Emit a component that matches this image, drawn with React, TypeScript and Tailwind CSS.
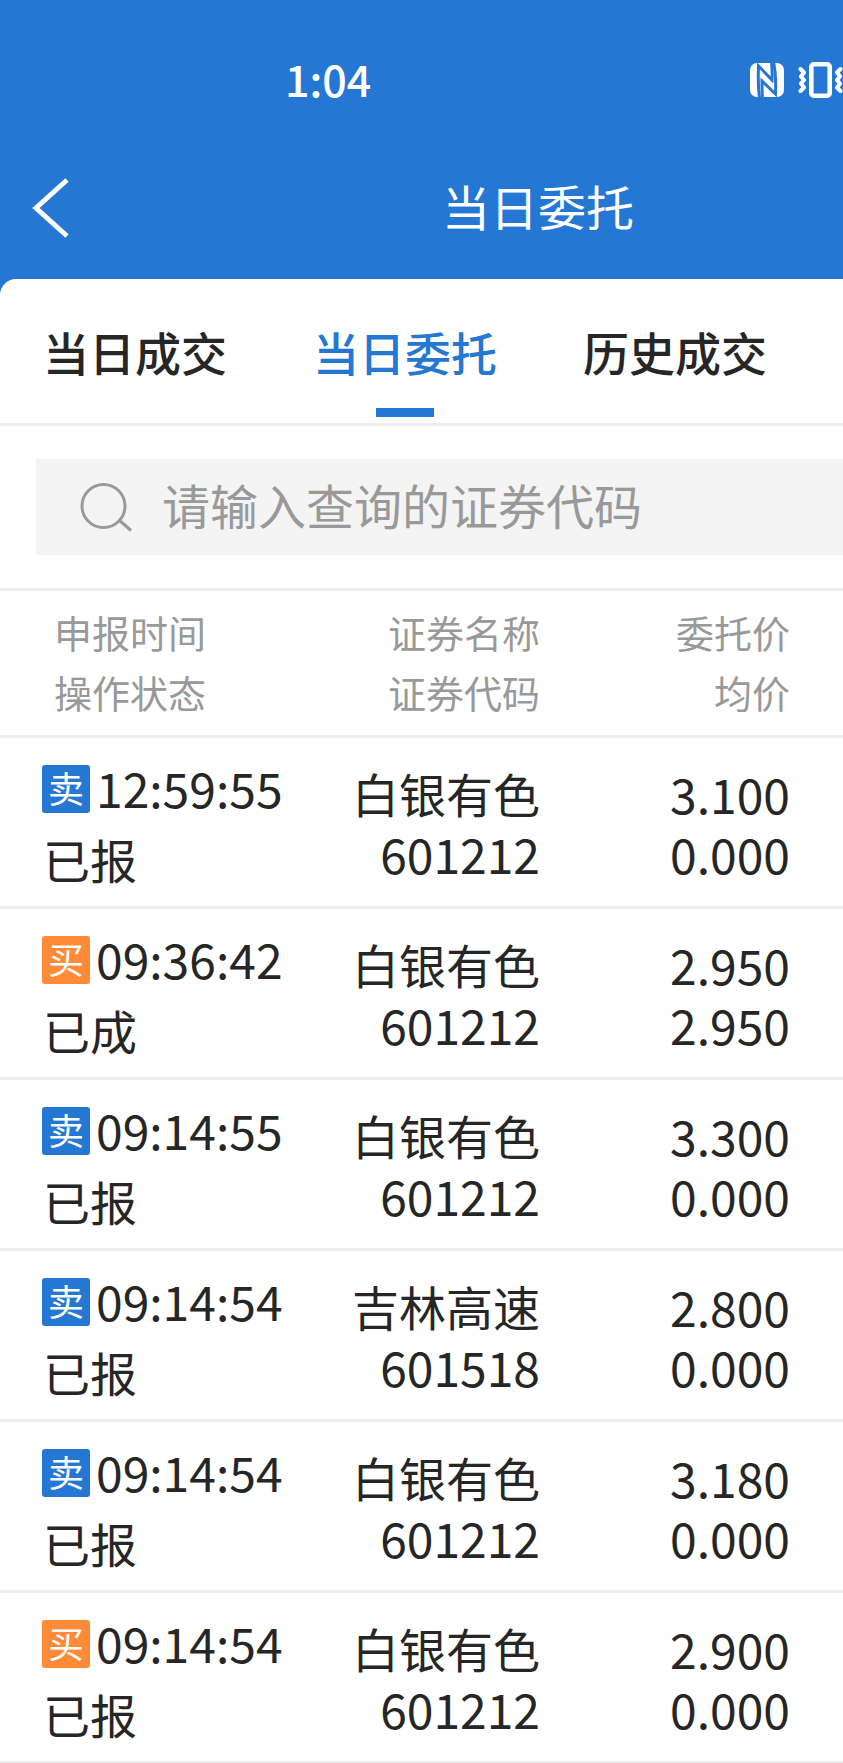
import { useState } from 'react';

const tabs = ['当日成交', '当日委托', '历史成交'];

const orders = [
  { side: 'sell', time: '12:59:55', status: '已报', name: '白银有色', code: '601212', price: '3.100', average: '0.000' },
  { side: 'buy', time: '09:36:42', status: '已成', name: '白银有色', code: '601212', price: '2.950', average: '2.950' },
  { side: 'sell', time: '09:14:55', status: '已报', name: '白银有色', code: '601212', price: '3.300', average: '0.000' },
  { side: 'sell', time: '09:14:54', status: '已报', name: '吉林高速', code: '601518', price: '2.800', average: '0.000' },
  { side: 'sell', time: '09:14:54', status: '已报', name: '白银有色', code: '601212', price: '3.180', average: '0.000' },
  { side: 'buy', time: '09:14:54', status: '已报', name: '白银有色', code: '601212', price: '2.900', average: '0.000' }
];

function NfcIcon() {
  return (
    <svg viewBox="0 0 34 34" className="h-[34px] w-[34px]" aria-hidden="true">
      <rect width="34" height="34" rx="7" fill="#fff" />
      <g fill="none" stroke="#2577d4" strokeWidth="3">
        <path d="M9.5 35C8.5 28 8 15 8.5 3L22 17C22.500 10 22 5 21.500 -1" />
        <path d="M23.500 -1C25.500 8 26 20 25.500 31L12 18C12 24 12 29 12.500 35" />
      </g>
    </svg>
  );
}

function VibrateIcon() {
  return (
    <svg viewBox="0 0 45 36" className="h-9 w-[45px]" fill="none" stroke="#fff" aria-hidden="true">
      <rect x="13.3" y="2.3" width="18.400" height="31.400" rx="2.500" strokeWidth="4.600" />
      <g strokeWidth="4" strokeLinecap="round" strokeLinejoin="round">
        <path d="M2.500 7L6 10.500L3 14.500L6 18L3 21.500L6 25.500L2.500 29" />
        <path d="M42.500 7L39 10.500L42 14.500L39 18L42 21.500L39 25.500L42.500 29" />
      </g>
    </svg>
  );
}

function Header() {
  return (
    <header className="text-white">
      <div className="flex h-[112px] items-center pt-12">
        <time className="ml-[285px] pb-1 text-[43px] leading-[54px] font-medium">1:04</time>
        <div className="ml-auto flex items-center gap-3.5">
          <NfcIcon />
          <VibrateIcon />
        </div>
      </div>
      <div className="flex h-[167px] items-center pt-6">
        <button type="button" aria-label="返回" className="ml-8">
          <svg viewBox="0 0 38 62" className="h-[62px] w-[38px]" fill="none" stroke="#fff" strokeWidth="5" aria-hidden="true">
            <path d="M35 3L4 31L35 59" />
          </svg>
        </button>
        <h1 className="ml-[372px] pb-1.5 text-5xl">当日委托</h1>
      </div>
    </header>
  );
}

function SearchBar() {
  return (
    <div className="border-b-[3px] border-[#ededed] py-[33px] pl-9">
      <label className="flex h-24 items-center bg-[#f4f4f4] pl-11">
        <svg viewBox="0 0 52 50" className="h-[50px] w-[52px] shrink-0" fill="none" stroke="#999" strokeWidth="3" aria-hidden="true">
          <circle cx="23.500" cy="24" r="21.500" />
          <path d="M39 38L51 48.500" />
        </svg>
        <input
          type="text"
          aria-label="证券代码"
          placeholder="请输入查询的证券代码"
          className="ml-[30px] h-full w-full min-w-0 bg-transparent pb-1.5 text-5xl text-[#262626] outline-none placeholder:text-[#999]"
        />
      </label>
    </div>
  );
}

function OrderTable() {
  return (
    <table className="w-full table-fixed border-separate border-spacing-0">
      <thead>
        <tr className="text-[38px] leading-[60px] text-[#999] [&>th]:border-b-[3px] [&>th]:border-[#ededed] [&>th]:pt-[11px] [&>th]:pb-[13px] [&>th]:font-normal">
          <th scope="col" className="w-[300px] pl-[54px] text-left">
            <div>申报时间</div>
            <div>操作状态</div>
          </th>
          <th scope="col" className="w-60 text-right">
            <div>证券名称</div>
            <div>证券代码</div>
          </th>
          <th scope="col" className="pr-[53px] text-right">
            <div>委托价</div>
            <div>均价</div>
          </th>
        </tr>
      </thead>
      <tbody>
        {orders.map((order, index) => (
          <tr
            key={index}
            className="text-5xl leading-[60px] text-[#262626] [&>td]:border-b-[3px] [&>td]:border-[#ededed] [&>td]:pt-[25px] [&>td]:pb-[17px] [&>td]:align-top last:[&>td]:border-b-2"
          >
            <td className="pl-[42px]">
              <div className="flex h-[52px] items-center gap-1.5 whitespace-nowrap">
                <span
                  className={
                    order.side === 'sell'
                      ? 'flex h-12 w-12 items-center justify-center rounded-[3px] bg-[#2577d4] pb-1 text-4xl text-white'
                      : 'flex h-12 w-12 items-center justify-center rounded-[3px] bg-[#ff8a38] pb-1 text-4xl text-white'
                  }
                >
                  {order.side === 'sell' ? '卖' : '买'}
                </span>
                <time className="pb-1">{order.time}</time>
              </div>
              <div className="mt-3.5 pl-px text-[47px] leading-[60px]">{order.status}</div>
            </td>
            <td className="text-right">
              <div className="text-[47px] leading-[60px]">{order.name}</div>
              <div>{order.code}</div>
            </td>
            <td className="pr-[53px] text-right">
              <div>{order.price}</div>
              <div>{order.average}</div>
            </td>
          </tr>
        ))}
      </tbody>
    </table>
  );
}

export default function App() {
  const [active, setActive] = useState(1);

  return (
    <div className="overflow-hidden bg-[#2577d4] font-['Noto_Sans_CJK_SC',sans-serif]">
      <Header />
      <main className="rounded-tl-2xl bg-white">
        <nav className="flex h-[147px] border-b-[3px] border-[#ededed]">
          {tabs.map((tab, index) => (
            <button
              key={tab}
              type="button"
              onClick={() => setActive(index)}
              className={
                index === active
                  ? 'flex w-[270px] flex-col items-center pt-[39px] text-[46px] leading-[66px] font-medium text-[#2577d4]'
                  : 'flex w-[270px] flex-col items-center pt-[39px] text-[46px] leading-[66px] font-medium text-[#262626]'
              }
            >
              {tab}
              {index === active && <span className="mt-6 h-[9px] w-[58px] bg-[#2577d4]" />}
            </button>
          ))}
        </nav>
        <SearchBar />
        <OrderTable />
      </main>
    </div>
  );
}
